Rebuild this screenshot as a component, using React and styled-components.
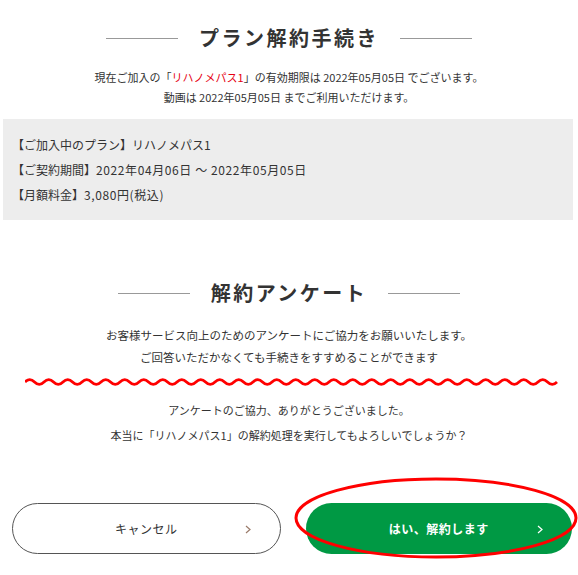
import styled, { createGlobalStyle } from 'styled-components';

const GlobalStyle = createGlobalStyle`
  body {
    margin: 0;
    background: #fff;
    font-family: 'Noto Sans CJK JP', 'Noto Sans', sans-serif;
    color: #333;
  }
`;

const Page = styled.div`
  width: 578px;
  height: 575px;
  overflow: hidden;
`;

const Heading = styled.div`
  display: flex;
  align-items: center;
  justify-content: center;
  gap: 21px;
  margin-top: ${(p) => p.$top}px;
  height: 22px;

  &::before,
  &::after {
    content: '';
    width: 72px;
    height: 1px;
    background: #999;
  }
`;

const HeadingText = styled.h2`
  margin: 0;
  font-size: 20px;
  line-height: 22px;
  font-weight: 700;
  letter-spacing: 2.5px;
  color: #333;
`;

const Lead = styled.p`
  margin: ${(p) => p.$top}px 0 0;
  text-align: center;
  font-size: ${(p) => p.$size || 11}px;
  line-height: ${(p) => p.$lh}px;
`;

const Red = styled.span`
  color: #e60012;
`;

const InfoBox = styled.div`
  margin: 12px 5px 0 3px;
  padding: 13px 10px 13px 9px;
  background: #ededed;
  font-size: 12px;
  line-height: 25px;
`;

const Num = styled.span`
  letter-spacing: 0.6px;
`;

const Wave = styled.svg`
  display: block;
  margin: 9px 0 0 25px;
`;

const Buttons = styled.div`
  position: relative;
  display: flex;
  gap: 25px;
  margin-top: 55px;
  padding: 0 6px 0 12px;
`;

const Button = styled.button`
  position: relative;
  flex: 1;
  height: 51px;
  border-radius: 26px;
  border: ${(p) => (p.$primary ? 'none' : '1px solid #555')};
  background: ${(p) => (p.$primary ? '#009944' : '#fff')};
  color: ${(p) => (p.$primary ? '#fff' : '#333')};
  font-family: inherit;
  font-size: 12px;
  font-weight: ${(p) => (p.$primary ? 700 : 400)};
  letter-spacing: 0.5px;
  cursor: pointer;
`;

const Chevron = styled.svg`
  position: absolute;
  right: 29px;
  top: 50%;
  margin-top: -4px;
`;

const Circle = styled.svg`
  position: absolute;
  left: 282px;
  top: -27px;
  pointer-events: none;
`;

function wavePath(width, period, amp, mid) {
  const half = period / 2;
  let d = `M0 ${mid}`;
  for (let x = 0, up = true; x < width; x += half, up = !up) {
    d += ` Q${x + half / 2} ${up ? mid - amp * 2 : mid + amp * 2} ${x + half} ${mid}`;
  }
  return d;
}

const ChevronIcon = ({ color }) => (
  <Chevron width="6" height="9" viewBox="0 0 6 9">
    <polyline points="1,1 5,4.5 1,8" fill="none" stroke={color} strokeWidth="1.2" />
  </Chevron>
);

export default function App() {
  return (
    <Page>
      <GlobalStyle />
      <Heading $top={27}>
        <HeadingText>プラン解約手続き</HeadingText>
      </Heading>
      <Lead $top={18} $lh={20}>
        現在ご加入の「<Red>リハノメパス1</Red>」の有効期限は 2022年05月05日 でございます。
        <br />
        動画は 2022年05月05日 までご利用いただけます。
      </Lead>
      <InfoBox>
        <div>【ご加入中のプラン】リハノメパス1</div>
        <div>
          【ご契約期間】<Num>2022年04月06日 ～ 2022年05月05日</Num>
        </div>
        <div>
          【月額料金】<Num>3,080円(税込)</Num>
        </div>
      </InfoBox>
      <Heading $top={62}>
        <HeadingText>解約アンケート</HeadingText>
      </Heading>
      <Lead $top={20} $lh={22} $size={11.5}>
        お客様サービス向上のためのアンケートにご協力をお願いいたします。
        <br />
        ご回答いただかなくても手続きをすすめることができます
      </Lead>
      <Wave width="534" height="10" viewBox="0 0 534 10">
        <path d={wavePath(532, 19, 2.4, 5)} fill="none" stroke="#ff0000" strokeWidth="2.8" />
      </Wave>
      <Lead $top={11} $lh={25}>
        アンケートのご協力、ありがとうございました。
        <br />
        本当に「リハノメパス1」の解約処理を実行してもよろしいでしょうか？
      </Lead>
      <Buttons>
        <Button>
          キャンセル
          <ChevronIcon color="#9a7b6a" />
        </Button>
        <Button $primary>
          はい、解約します
          <ChevronIcon color="#fff" />
        </Button>
        <Circle width="296" height="90" viewBox="0 0 296 90">
          <ellipse cx="154" cy="42" rx="140" ry="39" fill="none" stroke="#ff0000" strokeWidth="3" />
        </Circle>
      </Buttons>
    </Page>
  );
}
